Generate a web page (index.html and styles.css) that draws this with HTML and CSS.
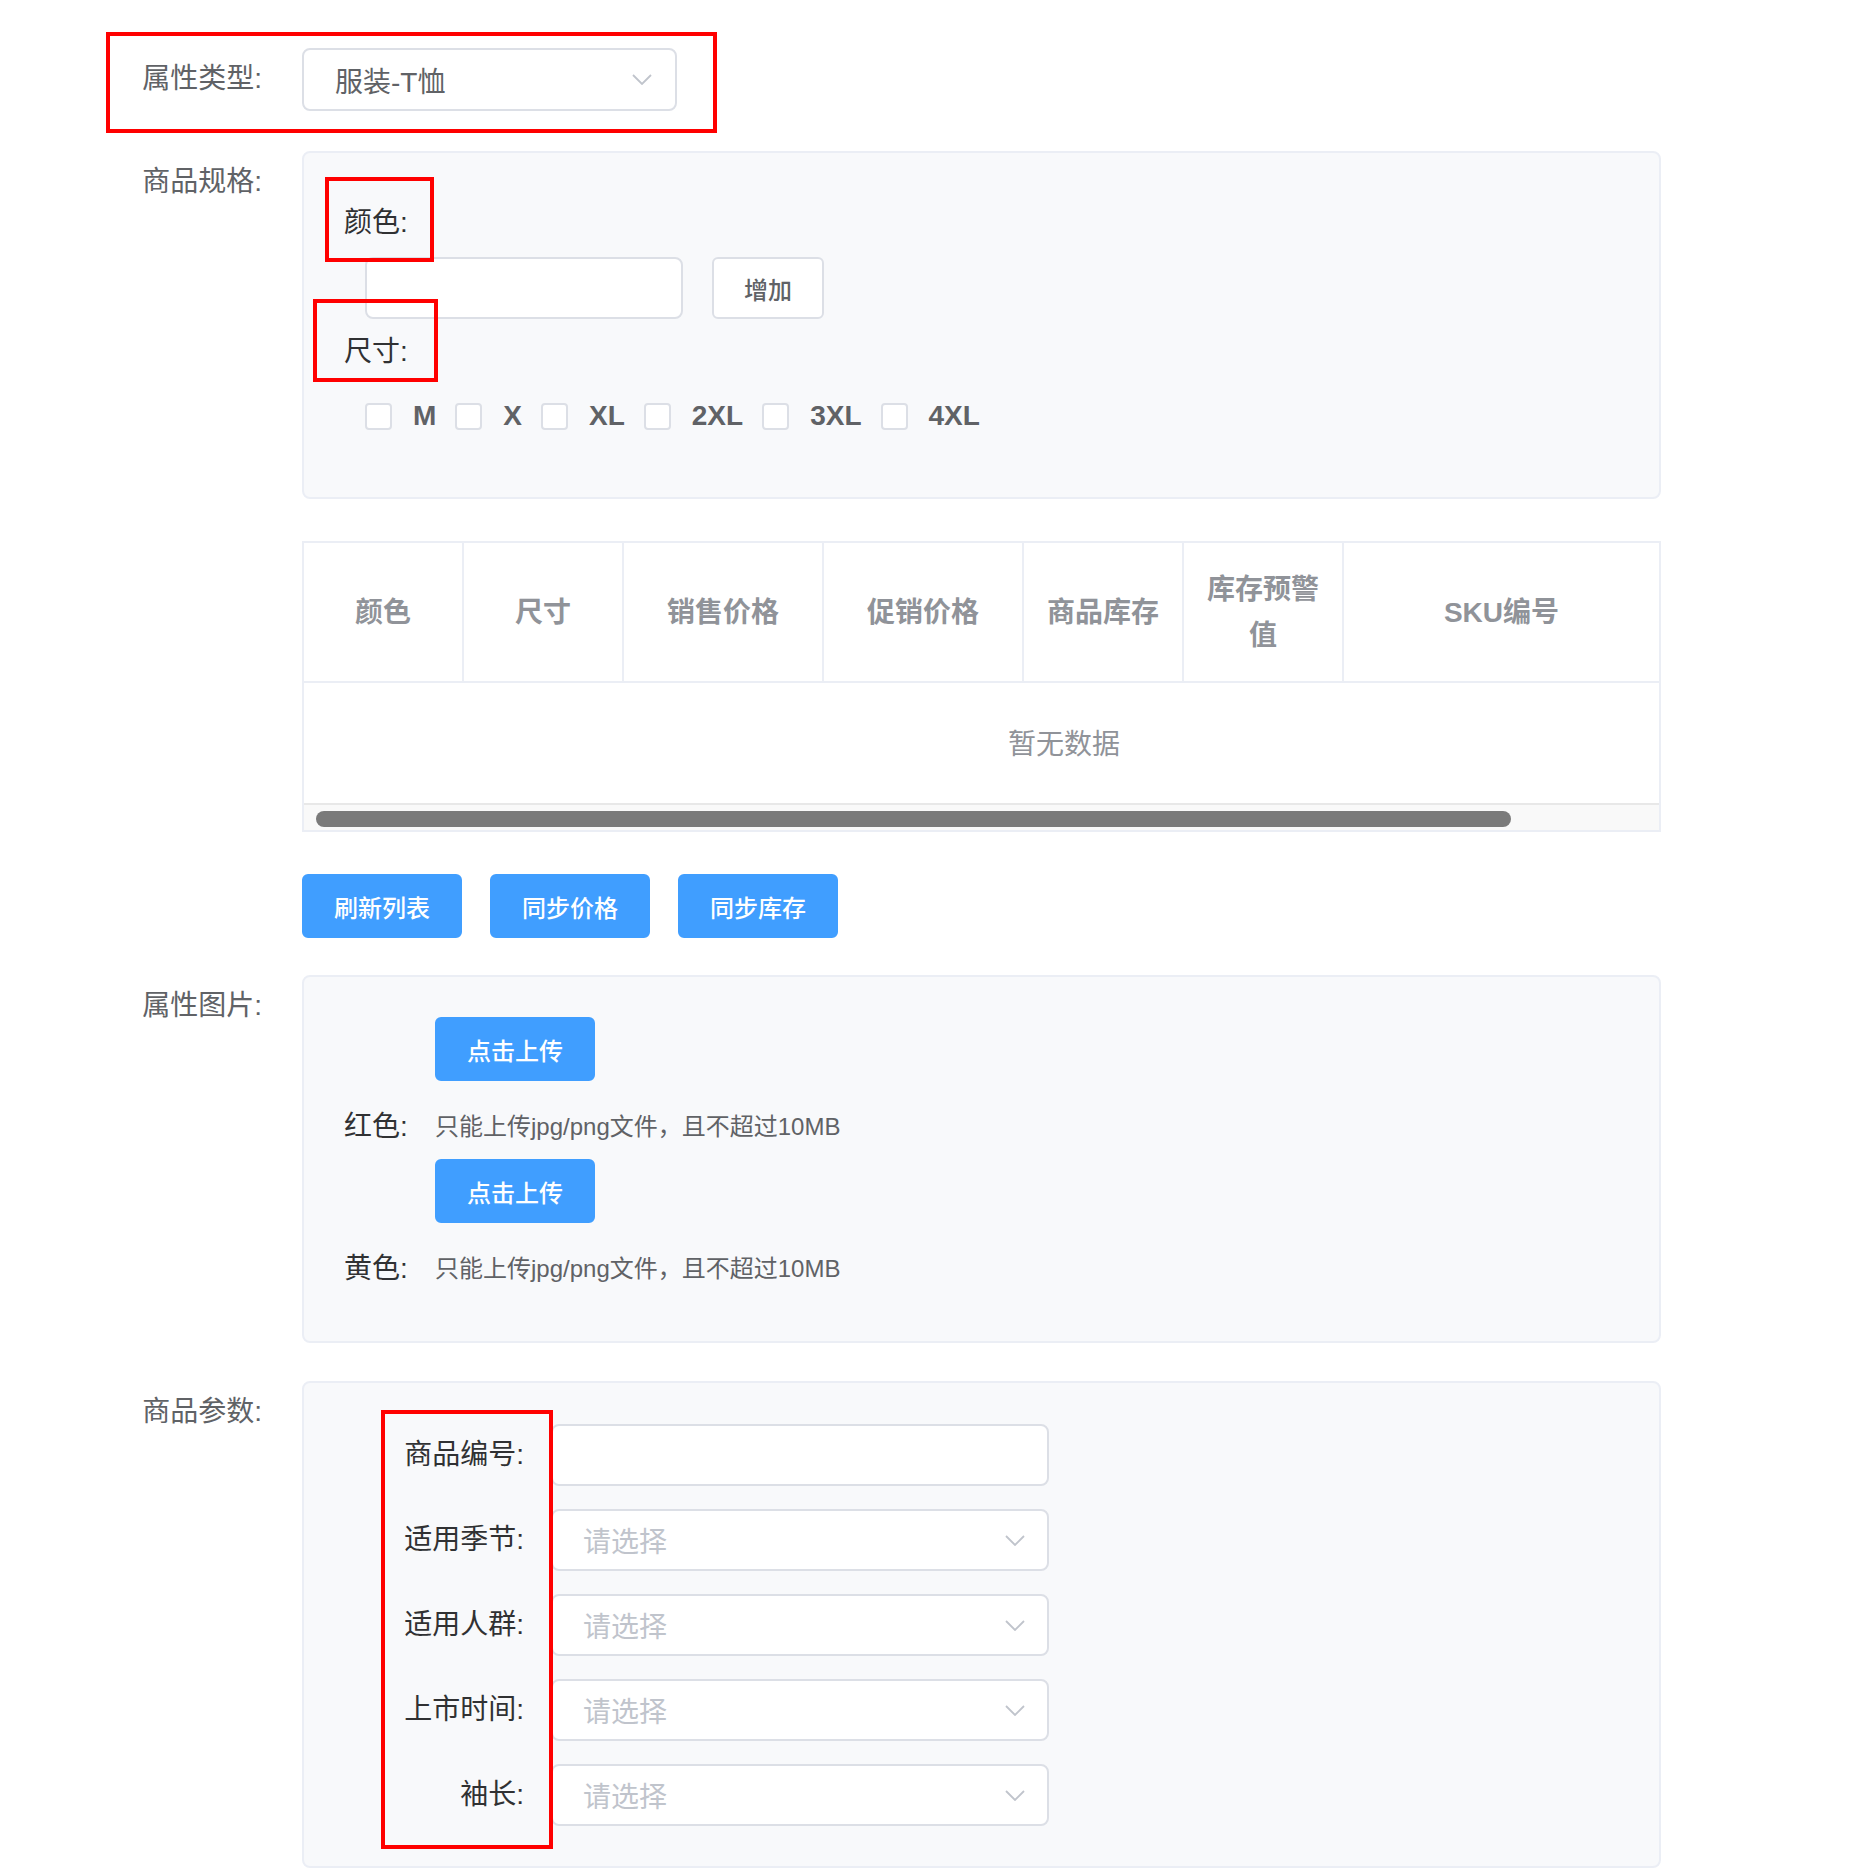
FILE: index.html
```html
<!DOCTYPE html>
<html lang="zh-CN">
<head>
    <meta charset="UTF-8">
    <meta name="viewport" content="width=device-width, initial-scale=1.0">
    <title>商品属性</title>
    <link rel="stylesheet" href="styles.css">
</head>
<body>
    <div class="form">
        <div class="form-row">
            <label class="form-label">属性类型:</label>
            <div class="select type-select">
                <span>服装-T恤</span>
                <svg class="arrow" width="20" height="11" viewBox="0 0 20 11"><polyline points="1,1 10,10 19,1"/></svg>
            </div>
            <div class="mark mark-type"></div>
        </div>

        <div class="form-row spec-row">
            <label class="form-label">商品规格:</label>
            <div class="panel spec-panel">
                <div class="spec-label">颜色:</div>
                <div class="spec-add">
                    <input class="input color-input" type="text">
                    <button class="btn btn-plain">增加</button>
                </div>
                <div class="spec-label size-label">尺寸:</div>
                <div class="check-group">
                    <label class="check"><span class="check-box"></span><span class="check-text">M</span></label>
                    <label class="check"><span class="check-box"></span><span class="check-text">X</span></label>
                    <label class="check"><span class="check-box"></span><span class="check-text">XL</span></label>
                    <label class="check"><span class="check-box"></span><span class="check-text">2XL</span></label>
                    <label class="check"><span class="check-box"></span><span class="check-text">3XL</span></label>
                    <label class="check"><span class="check-box"></span><span class="check-text">4XL</span></label>
                </div>
                <div class="mark mark-color"></div>
                <div class="mark mark-size"></div>
            </div>
        </div>

        <div class="form-row sku-row">
            <span class="form-label"></span>
            <div class="sku-table">
                <div class="sku-head">
                    <div class="th">颜色</div>
                    <div class="th">尺寸</div>
                    <div class="th">销售价格</div>
                    <div class="th">促销价格</div>
                    <div class="th">商品库存</div>
                    <div class="th">库存预警值</div>
                    <div class="th">SKU编号</div>
                </div>
                <div class="sku-empty"><div class="sku-empty-text">暂无数据</div></div>
                <div class="sku-scroll"><div class="sku-thumb"></div></div>
            </div>
        </div>

        <div class="form-row action-row">
            <span class="form-label"></span>
            <div class="actions">
                <button class="btn btn-primary">刷新列表</button>
                <button class="btn btn-primary">同步价格</button>
                <button class="btn btn-primary">同步库存</button>
            </div>
        </div>

        <div class="form-row image-row">
            <label class="form-label">属性图片:</label>
            <div class="panel image-panel">
                <div class="upload-row">
                    <span class="upload-label">红色:</span>
                    <div class="upload">
                        <button class="btn btn-primary">点击上传</button>
                        <div class="upload-tip">只能上传jpg/png文件，且不超过10MB</div>
                    </div>
                </div>
                <div class="upload-row">
                    <span class="upload-label">黄色:</span>
                    <div class="upload">
                        <button class="btn btn-primary">点击上传</button>
                        <div class="upload-tip">只能上传jpg/png文件，且不超过10MB</div>
                    </div>
                </div>
            </div>
        </div>

        <div class="form-row last-row">
            <label class="form-label">商品参数:</label>
            <div class="panel param-panel">
                <div class="param-list">
                    <div class="param-row">
                        <span class="param-label">商品编号:</span>
                        <input class="input param-input" type="text">
                    </div>
                    <div class="param-row">
                        <span class="param-label">适用季节:</span>
                        <div class="select param-select">
                            <span class="placeholder">请选择</span>
                            <svg class="arrow" width="20" height="11" viewBox="0 0 20 11"><polyline points="1,1 10,10 19,1"/></svg>
                        </div>
                    </div>
                    <div class="param-row">
                        <span class="param-label">适用人群:</span>
                        <div class="select param-select">
                            <span class="placeholder">请选择</span>
                            <svg class="arrow" width="20" height="11" viewBox="0 0 20 11"><polyline points="1,1 10,10 19,1"/></svg>
                        </div>
                    </div>
                    <div class="param-row">
                        <span class="param-label">上市时间:</span>
                        <div class="select param-select">
                            <span class="placeholder">请选择</span>
                            <svg class="arrow" width="20" height="11" viewBox="0 0 20 11"><polyline points="1,1 10,10 19,1"/></svg>
                        </div>
                    </div>
                    <div class="param-row">
                        <span class="param-label">袖长:</span>
                        <div class="select param-select">
                            <span class="placeholder">请选择</span>
                            <svg class="arrow" width="20" height="11" viewBox="0 0 20 11"><polyline points="1,1 10,10 19,1"/></svg>
                        </div>
                    </div>
                </div>
                <div class="mark mark-param"></div>
            </div>
        </div>
    </div>
</body>
</html>
```

FILE: styles.css
```css
body {
    margin: 0;
    background: #fff;
    font-family: "Liberation Sans", "Noto Sans CJK SC", sans-serif;
    color: #606266;
}

.form {
    margin-left: 62px;
    padding-top: 48px;
}

.form-row {
    position: relative;
    display: flex;
    align-items: flex-start;
    margin-bottom: 40px;
}

.spec-row,
.sku-row {
    margin-bottom: 42px;
}

.action-row {
    margin-bottom: 37px;
}

.image-row {
    margin-bottom: 38px;
}

.last-row {
    margin-bottom: 0;
}

.form-label {
    flex: none;
    width: 240px;
    padding-right: 40px;
    box-sizing: border-box;
    text-align: right;
    font-size: 28px;
    line-height: 62px;
    color: #606266;
}

/* red annotation frames */
.mark {
    position: absolute;
    border: 4px solid #ff0000;
    box-sizing: border-box;
    pointer-events: none;
}

.mark-type {
    left: 44px;
    top: -16px;
    width: 611px;
    height: 101px;
}

.mark-color {
    left: 21px;
    top: 24px;
    width: 109px;
    height: 85px;
}

.mark-size {
    left: 9px;
    top: 146px;
    width: 125px;
    height: 83px;
}

.mark-param {
    left: 77px;
    top: 27px;
    width: 172px;
    height: 439px;
}

/* inputs */
.select,
.input {
    box-sizing: border-box;
    height: 63px;
    border: 2px solid #dcdfe6;
    border-radius: 8px;
    background: #fff;
    font-family: inherit;
    font-size: 28px;
    color: #606266;
}

.select {
    display: flex;
    align-items: center;
    justify-content: space-between;
    padding: 0 23px 0 31px;
}

.arrow {
    flex: none;
}

.arrow polyline {
    fill: none;
    stroke: #c0c4cc;
    stroke-width: 1.8;
}

.placeholder {
    color: #c0c4cc;
}

.type-select {
    width: 375px;
}

/* buttons */
.btn {
    box-sizing: border-box;
    height: 64px;
    padding: 0 30px;
    border-radius: 6px;
    font-family: inherit;
    font-size: 24px;
    font-weight: 500;
    cursor: pointer;
}

.btn-primary {
    background: #409eff;
    border: 2px solid #409eff;
    color: #fff;
}

.btn-plain {
    background: #fff;
    border: 2px solid #dcdfe6;
    color: #606266;
}

/* grey panels */
.panel {
    position: relative;
    box-sizing: border-box;
    width: 1359px;
    background: #f8f9fb;
    border: 2px solid #ebeef5;
    border-radius: 8px;
}

.spec-panel {
    padding: 48px 40px 59px;
}

.spec-label {
    font-size: 28px;
    line-height: 44px;
    color: #303133;
}

.spec-add {
    display: flex;
    margin: 12px 0 0 21px;
}

.color-input {
    width: 318px;
    height: 62px;
}

.spec-add .btn {
    height: 62px;
    margin-left: 29px;
}

.size-label {
    margin-top: 11px;
}

.check-group {
    display: flex;
    align-items: center;
    height: 44px;
    margin: 20px 0 0 21px;
}

.check {
    display: flex;
    align-items: center;
    margin-right: 19px;
}

.check-box {
    box-sizing: border-box;
    width: 27px;
    height: 27px;
    border: 2px solid #dcdfe6;
    border-radius: 4px;
    background: #fff;
}

.check-text {
    margin-left: 21px;
    font-size: 28px;
    font-weight: 700;
    color: #606266;
}

/* sku table */
.sku-table {
    box-sizing: border-box;
    width: 1359px;
    border: 2px solid #ebeef5;
    background: #fff;
}

.sku-head {
    display: grid;
    grid-template-columns: 160px 160px 200px 200px 160px 160px 1fr;
    border-bottom: 2px solid #ebeef5;
}

.th {
    display: flex;
    align-items: center;
    justify-content: center;
    box-sizing: border-box;
    padding: 24px 20px 22px;
    border-right: 2px solid #ebeef5;
    text-align: center;
    font-size: 28px;
    font-weight: 700;
    line-height: 46px;
    color: #909399;
}

.th:last-child {
    border-right: none;
}

/* the body is wider than the visible part, so the text sits right of centre */
.sku-empty {
    height: 120px;
    overflow: hidden;
}

.sku-empty-text {
    width: 1520px;
    padding-top: 2px;
    line-height: 120px;
    text-align: center;
    font-size: 28px;
    color: #909399;
}

.sku-scroll {
    height: 25px;
    border-top: 2px solid #e8e8e8;
    background: #f9f9f9;
    overflow: hidden;
}

.sku-thumb {
    width: 1195px;
    height: 16px;
    margin: 6px 0 0 12px;
    border-radius: 8px;
    background: #7a7a7a;
}

.actions {
    display: flex;
    gap: 28px;
}

/* attribute images */
.image-panel {
    padding: 40px;
}

.upload-row {
    display: flex;
    align-items: flex-end;
}

.upload-label {
    width: 91px;
    flex: none;
    font-size: 28px;
    line-height: 64px;
    color: #303133;
}

.upload .btn {
    display: block;
    width: 160px;
}

.upload-tip {
    margin-top: 14px;
    font-size: 24px;
    line-height: 64px;
    color: #606266;
}

/* params */
.param-panel {
    padding: 41px 0 40px;
}

.param-list {
    display: flex;
    flex-direction: column;
    gap: 23px;
}

.param-row {
    display: flex;
    align-items: center;
}

.param-label {
    flex: none;
    box-sizing: border-box;
    width: 247px;
    padding-right: 27px;
    text-align: right;
    font-size: 28px;
    line-height: 62px;
    color: #303133;
}

.param-input,
.param-select {
    width: 498px;
    height: 62px;
}

.param-select {
    padding: 0 22px 0 30px;
}
```
